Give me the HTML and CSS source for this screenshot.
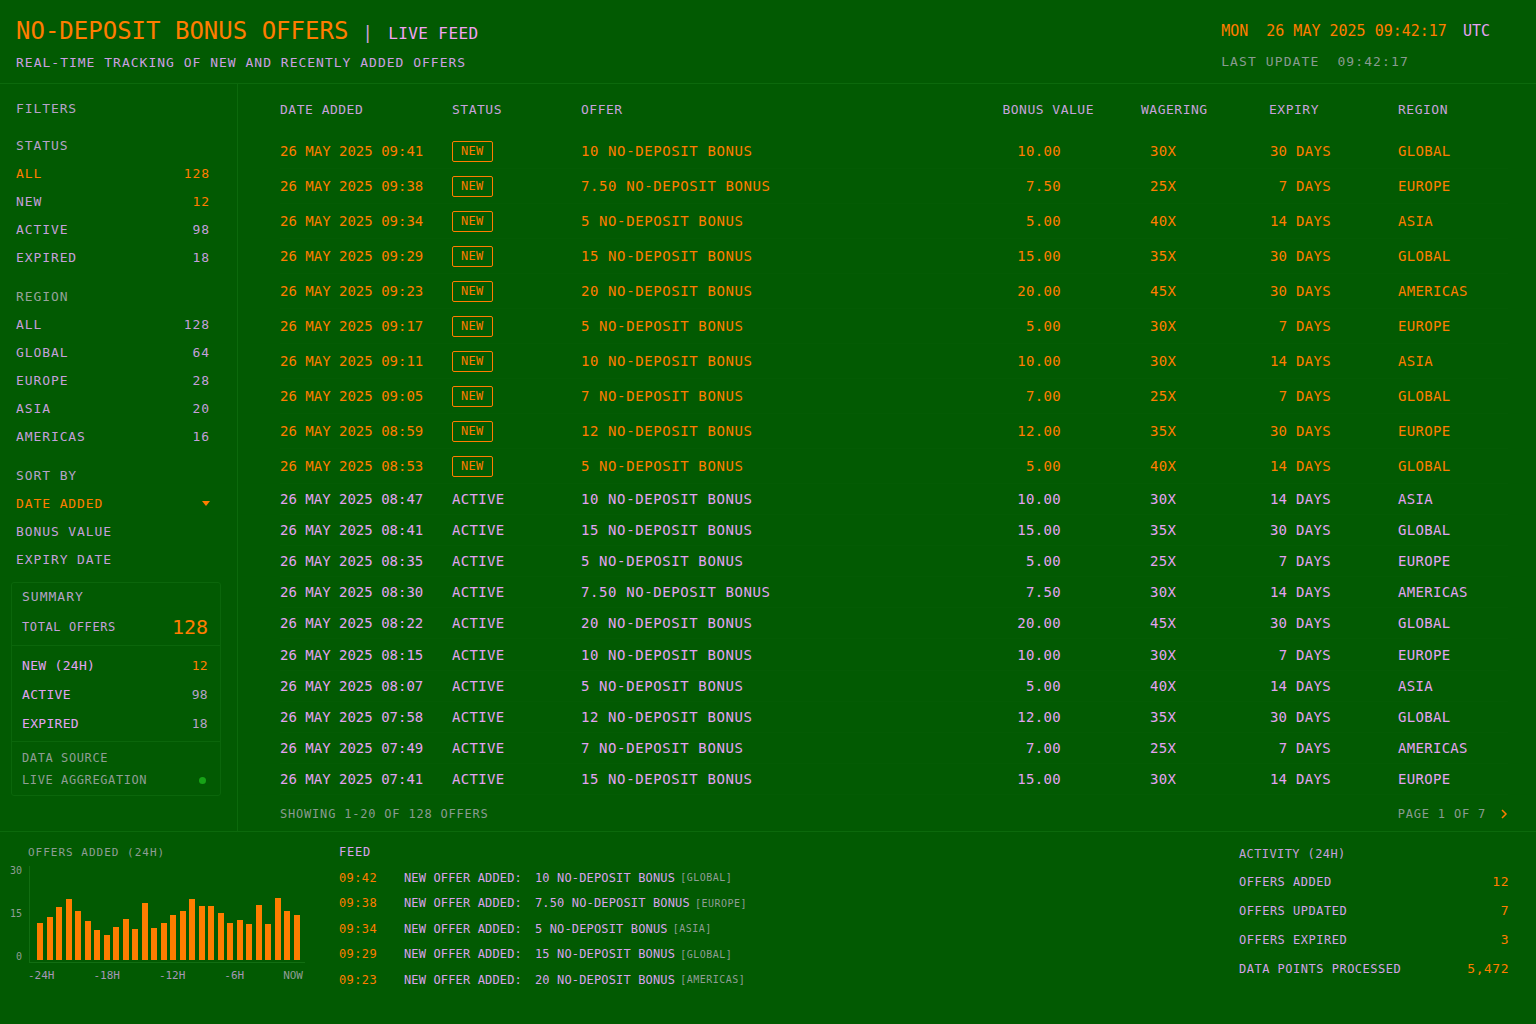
FILE: index.html
```html
<!DOCTYPE html>
<html lang="en">
<head>
    <meta charset="UTF-8">
    <meta name="viewport" content="width=device-width, initial-scale=1.0">
    <title>No-Deposit Bonus Offers | Live Feed</title>
    <link rel="stylesheet" href="styles.css">
</head>
<body>
    <header class="topbar">
        <div class="brand">
            <h1>NO-DEPOSIT BONUS OFFERS<span class="sep">|</span><span class="live">LIVE FEED</span></h1>
            <p class="subtitle">REAL-TIME TRACKING OF NEW AND RECENTLY ADDED OFFERS</p>
        </div>
        <div class="clock">
            <div class="now"><span>MON</span><span class="date">26 MAY 2025 09:42:17</span><span class="tz">UTC</span></div>
            <div class="updated">LAST UPDATE<span>09:42:17</span></div>
        </div>
    </header>

    <div class="content">
        <!-- 筛选栏 -->
        <aside class="sidebar">
            <div class="side-title">FILTERS</div>

            <div class="group">
                <div class="group-label">STATUS</div>
                <div class="opt is-active"><span>ALL</span><span>128</span></div>
                <div class="opt"><span>NEW</span><span class="hot">12</span></div>
                <div class="opt"><span>ACTIVE</span><span>98</span></div>
                <div class="opt"><span>EXPIRED</span><span>18</span></div>
            </div>

            <div class="group">
                <div class="group-label dim">REGION</div>
                <div class="opt"><span>ALL</span><span>128</span></div>
                <div class="opt"><span>GLOBAL</span><span>64</span></div>
                <div class="opt"><span>EUROPE</span><span>28</span></div>
                <div class="opt"><span>ASIA</span><span>20</span></div>
                <div class="opt"><span>AMERICAS</span><span>16</span></div>
            </div>

            <div class="group">
                <div class="group-label">SORT BY</div>
                <div class="opt is-active"><span>DATE ADDED</span><span class="caret"></span></div>
                <div class="opt"><span>BONUS VALUE</span></div>
                <div class="opt"><span>EXPIRY DATE</span></div>
            </div>

            <div class="summary">
                <div class="sum-head">
                    <div class="sum-title">SUMMARY</div>
                    <div class="sum-total"><span>TOTAL OFFERS</span><span class="big">128</span></div>
                </div>
                <div class="sum-rows">
                    <div class="sum-row"><span>NEW (24H)</span><span class="hot">12</span></div>
                    <div class="sum-row"><span>ACTIVE</span><span class="num">98</span></div>
                    <div class="sum-row"><span>EXPIRED</span><span class="num">18</span></div>
                </div>
                <div class="sum-source">
                    <div>DATA SOURCE</div>
                    <div class="source-line"><span>LIVE AGGREGATION</span><span class="dot"></span></div>
                </div>
            </div>
        </aside>

        <!-- 报价列表 -->
        <main class="main">
            <div class="row thead">
                <div>DATE ADDED</div>
                <div>STATUS</div>
                <div>OFFER</div>
                <div class="c-bonus">BONUS VALUE</div>
                <div>WAGERING</div>
                <div>EXPIRY</div>
                <div>REGION</div>
            </div>

            <div class="row is-new"><div>26 MAY 2025 09:41</div><div><span class="badge">NEW</span></div><div class="c-offer">10 NO-DEPOSIT BONUS</div><div class="c-bonus">10.00</div><div class="c-wager">30X</div><div class="c-expiry">30 DAYS</div><div>GLOBAL</div></div>
            <div class="row is-new"><div>26 MAY 2025 09:38</div><div><span class="badge">NEW</span></div><div class="c-offer">7.50 NO-DEPOSIT BONUS</div><div class="c-bonus">7.50</div><div class="c-wager">25X</div><div class="c-expiry">7 DAYS</div><div>EUROPE</div></div>
            <div class="row is-new"><div>26 MAY 2025 09:34</div><div><span class="badge">NEW</span></div><div class="c-offer">5 NO-DEPOSIT BONUS</div><div class="c-bonus">5.00</div><div class="c-wager">40X</div><div class="c-expiry">14 DAYS</div><div>ASIA</div></div>
            <div class="row is-new"><div>26 MAY 2025 09:29</div><div><span class="badge">NEW</span></div><div class="c-offer">15 NO-DEPOSIT BONUS</div><div class="c-bonus">15.00</div><div class="c-wager">35X</div><div class="c-expiry">30 DAYS</div><div>GLOBAL</div></div>
            <div class="row is-new"><div>26 MAY 2025 09:23</div><div><span class="badge">NEW</span></div><div class="c-offer">20 NO-DEPOSIT BONUS</div><div class="c-bonus">20.00</div><div class="c-wager">45X</div><div class="c-expiry">30 DAYS</div><div>AMERICAS</div></div>
            <div class="row is-new"><div>26 MAY 2025 09:17</div><div><span class="badge">NEW</span></div><div class="c-offer">5 NO-DEPOSIT BONUS</div><div class="c-bonus">5.00</div><div class="c-wager">30X</div><div class="c-expiry">7 DAYS</div><div>EUROPE</div></div>
            <div class="row is-new"><div>26 MAY 2025 09:11</div><div><span class="badge">NEW</span></div><div class="c-offer">10 NO-DEPOSIT BONUS</div><div class="c-bonus">10.00</div><div class="c-wager">30X</div><div class="c-expiry">14 DAYS</div><div>ASIA</div></div>
            <div class="row is-new"><div>26 MAY 2025 09:05</div><div><span class="badge">NEW</span></div><div class="c-offer">7 NO-DEPOSIT BONUS</div><div class="c-bonus">7.00</div><div class="c-wager">25X</div><div class="c-expiry">7 DAYS</div><div>GLOBAL</div></div>
            <div class="row is-new"><div>26 MAY 2025 08:59</div><div><span class="badge">NEW</span></div><div class="c-offer">12 NO-DEPOSIT BONUS</div><div class="c-bonus">12.00</div><div class="c-wager">35X</div><div class="c-expiry">30 DAYS</div><div>EUROPE</div></div>
            <div class="row is-new"><div>26 MAY 2025 08:53</div><div><span class="badge">NEW</span></div><div class="c-offer">5 NO-DEPOSIT BONUS</div><div class="c-bonus">5.00</div><div class="c-wager">40X</div><div class="c-expiry">14 DAYS</div><div>GLOBAL</div></div>

            <div class="row"><div>26 MAY 2025 08:47</div><div>ACTIVE</div><div class="c-offer">10 NO-DEPOSIT BONUS</div><div class="c-bonus">10.00</div><div class="c-wager">30X</div><div class="c-expiry">14 DAYS</div><div>ASIA</div></div>
            <div class="row"><div>26 MAY 2025 08:41</div><div>ACTIVE</div><div class="c-offer">15 NO-DEPOSIT BONUS</div><div class="c-bonus">15.00</div><div class="c-wager">35X</div><div class="c-expiry">30 DAYS</div><div>GLOBAL</div></div>
            <div class="row"><div>26 MAY 2025 08:35</div><div>ACTIVE</div><div class="c-offer">5 NO-DEPOSIT BONUS</div><div class="c-bonus">5.00</div><div class="c-wager">25X</div><div class="c-expiry">7 DAYS</div><div>EUROPE</div></div>
            <div class="row"><div>26 MAY 2025 08:30</div><div>ACTIVE</div><div class="c-offer">7.50 NO-DEPOSIT BONUS</div><div class="c-bonus">7.50</div><div class="c-wager">30X</div><div class="c-expiry">14 DAYS</div><div>AMERICAS</div></div>
            <div class="row"><div>26 MAY 2025 08:22</div><div>ACTIVE</div><div class="c-offer">20 NO-DEPOSIT BONUS</div><div class="c-bonus">20.00</div><div class="c-wager">45X</div><div class="c-expiry">30 DAYS</div><div>GLOBAL</div></div>
            <div class="row"><div>26 MAY 2025 08:15</div><div>ACTIVE</div><div class="c-offer">10 NO-DEPOSIT BONUS</div><div class="c-bonus">10.00</div><div class="c-wager">30X</div><div class="c-expiry">7 DAYS</div><div>EUROPE</div></div>
            <div class="row"><div>26 MAY 2025 08:07</div><div>ACTIVE</div><div class="c-offer">5 NO-DEPOSIT BONUS</div><div class="c-bonus">5.00</div><div class="c-wager">40X</div><div class="c-expiry">14 DAYS</div><div>ASIA</div></div>
            <div class="row"><div>26 MAY 2025 07:58</div><div>ACTIVE</div><div class="c-offer">12 NO-DEPOSIT BONUS</div><div class="c-bonus">12.00</div><div class="c-wager">35X</div><div class="c-expiry">30 DAYS</div><div>GLOBAL</div></div>
            <div class="row"><div>26 MAY 2025 07:49</div><div>ACTIVE</div><div class="c-offer">7 NO-DEPOSIT BONUS</div><div class="c-bonus">7.00</div><div class="c-wager">25X</div><div class="c-expiry">7 DAYS</div><div>AMERICAS</div></div>
            <div class="row"><div>26 MAY 2025 07:41</div><div>ACTIVE</div><div class="c-offer">15 NO-DEPOSIT BONUS</div><div class="c-bonus">15.00</div><div class="c-wager">30X</div><div class="c-expiry">14 DAYS</div><div>EUROPE</div></div>

            <div class="table-foot">
                <span>SHOWING 1-20 OF 128 OFFERS</span>
                <span class="pager">PAGE 1 OF 7
                    <svg width="8" height="10" viewBox="0 0 8 10"><path d="M2 1 L6 5 L2 9" fill="none" stroke="#ff7d00" stroke-width="1.5"/></svg>
                </span>
            </div>
        </main>
    </div>

    <!-- 底部面板 -->
    <footer class="bottom">
        <section class="chart">
            <div class="panel-title">OFFERS ADDED (24H)</div>
            <div class="chart-body">
                <div class="y-labels"><span>30</span><span>15</span><span>0</span></div>
                <div class="plot">
                    <div class="bar" style="height: 37px"></div>
                    <div class="bar" style="height: 43px"></div>
                    <div class="bar" style="height: 53px"></div>
                    <div class="bar" style="height: 61px"></div>
                    <div class="bar" style="height: 49px"></div>
                    <div class="bar" style="height: 39px"></div>
                    <div class="bar" style="height: 30px"></div>
                    <div class="bar" style="height: 25px"></div>
                    <div class="bar" style="height: 33px"></div>
                    <div class="bar" style="height: 41px"></div>
                    <div class="bar" style="height: 31px"></div>
                    <div class="bar" style="height: 57px"></div>
                    <div class="bar" style="height: 32px"></div>
                    <div class="bar" style="height: 37px"></div>
                    <div class="bar" style="height: 45px"></div>
                    <div class="bar" style="height: 49px"></div>
                    <div class="bar" style="height: 61px"></div>
                    <div class="bar" style="height: 54px"></div>
                    <div class="bar" style="height: 54px"></div>
                    <div class="bar" style="height: 47px"></div>
                    <div class="bar" style="height: 37px"></div>
                    <div class="bar" style="height: 40px"></div>
                    <div class="bar" style="height: 36px"></div>
                    <div class="bar" style="height: 55px"></div>
                    <div class="bar" style="height: 36px"></div>
                    <div class="bar" style="height: 62px"></div>
                    <div class="bar" style="height: 49px"></div>
                    <div class="bar" style="height: 45px"></div>
                </div>
            </div>
            <div class="x-labels"><span>-24H</span><span>-18H</span><span>-12H</span><span>-6H</span><span>NOW</span></div>
        </section>

        <section class="feed">
            <div class="panel-title">FEED</div>
            <div class="feed-line"><span class="t">09:42</span><span class="msg">NEW OFFER ADDED:</span><span class="what">10 NO-DEPOSIT BONUS</span><span class="tag">[GLOBAL]</span></div>
            <div class="feed-line"><span class="t">09:38</span><span class="msg">NEW OFFER ADDED:</span><span class="what">7.50 NO-DEPOSIT BONUS</span><span class="tag">[EUROPE]</span></div>
            <div class="feed-line"><span class="t">09:34</span><span class="msg">NEW OFFER ADDED:</span><span class="what">5 NO-DEPOSIT BONUS</span><span class="tag">[ASIA]</span></div>
            <div class="feed-line"><span class="t">09:29</span><span class="msg">NEW OFFER ADDED:</span><span class="what">15 NO-DEPOSIT BONUS</span><span class="tag">[GLOBAL]</span></div>
            <div class="feed-line"><span class="t">09:23</span><span class="msg">NEW OFFER ADDED:</span><span class="what">20 NO-DEPOSIT BONUS</span><span class="tag">[AMERICAS]</span></div>
        </section>

        <section class="activity">
            <div class="panel-title">ACTIVITY (24H)</div>
            <div class="act-row"><span>OFFERS ADDED</span><span class="val">12</span></div>
            <div class="act-row"><span>OFFERS UPDATED</span><span class="val">7</span></div>
            <div class="act-row"><span>OFFERS EXPIRED</span><span class="val">3</span></div>
            <div class="act-row"><span>DATA POINTS PROCESSED</span><span class="val">5,472</span></div>
        </section>
    </footer>
</body>
</html>
```

FILE: styles.css
```css
/* 页面布局 */
* {
    box-sizing: border-box;
}

body {
    margin: 0;
    width: 1536px;
    height: 1024px;
    overflow: hidden;
    background-color: #025a02;
    color: #e4a2f2;
    font-family: "DejaVu Sans Mono", "Liberation Mono", monospace;
}

/* 顶栏 */
.topbar {
    height: 84px;
    border-bottom: 1px solid #0c690c;
    display: flex;
    justify-content: space-between;
    padding: 17px 46px 0 16px;
}

h1 {
    margin: 0;
    font-size: 24px;
    font-weight: normal;
    line-height: 28px;
    color: #ff7d00;
}

h1 .sep {
    margin: 0 15px 0 14px;
    font-size: 18px;
    color: #c7a0dc;
}

h1 .live {
    font-size: 16px;
    letter-spacing: 0.4px;
    color: #f2a2f2;
}

.subtitle {
    margin: 7px 0 0 0;
    font-size: 13px;
    line-height: 16px;
    letter-spacing: 1px;
    color: #cc9fe2;
}

.clock {
    display: flex;
    flex-direction: column;
    align-items: flex-start;
}

.now {
    font-size: 15px;
    line-height: 28px;
    color: #ff7d00;
}

.now .date {
    margin-left: 18px;
}

.now .tz {
    margin-left: 16px;
    color: #e4a2f2;
}

.updated {
    margin-top: 9px;
    font-size: 13px;
    line-height: 16px;
    letter-spacing: 1.1px;
    color: #8a9a91;
}

.updated span {
    margin-left: 18px;
}

.content {
    display: flex;
    height: 748px;
    border-bottom: 1px solid #0c690c;
}

/* 筛选栏 */
.sidebar {
    width: 238px;
    flex-shrink: 0;
    border-right: 1px solid #0c690c;
    padding: 16px 16px 0 11px;
    font-size: 13px;
    letter-spacing: 0.9px;
    color: #c59fdb;
}

.side-title {
    padding-left: 5px;
    line-height: 18px;
    margin-bottom: 15px;
    color: #b6a2c8;
}

.group + .group {
    margin-top: 13px;
}

.group-label {
    padding: 0 5px;
    line-height: 26px;
    color: #b6a2c8;
}

.group-label.dim {
    color: #96a29a;
}

.opt {
    display: flex;
    justify-content: space-between;
    align-items: center;
    height: 28px;
    padding: 0 11px 0 5px;
}

.opt.is-active {
    color: #ff7d00;
}

.hot {
    color: #ff7d00;
}

.caret {
    width: 0;
    height: 0;
    border-left: 4px solid transparent;
    border-right: 4px solid transparent;
    border-top: 5px solid #ff7d00;
}

.summary {
    margin-top: 9px;
    border: 1px solid #0b660b;
    border-radius: 3px;
    font-size: 12px;
    letter-spacing: 0.6px;
}

.sum-head {
    padding: 6px 12px 2px 10px;
    border-bottom: 1px solid #0b660b;
}

.sum-title {
    font-size: 13px;
    letter-spacing: 1px;
    line-height: 16px;
    color: #b6a2c8;
}

.sum-total {
    margin-top: 6px;
    height: 32px;
    display: flex;
    justify-content: space-between;
    align-items: center;
    color: #c59fdb;
}

.sum-total .big {
    font-size: 20px;
    letter-spacing: 0;
    color: #ff7d00;
}

.sum-rows {
    padding: 5px 12px 3px 10px;
    border-bottom: 1px solid #0b660b;
}

.sum-row {
    display: flex;
    justify-content: space-between;
    align-items: center;
    height: 29px;
    font-size: 13px;
    letter-spacing: 0.3px;
    color: #e2a2f2;
}

.sum-row .num {
    color: #b6a2c8;
}

.sum-source {
    padding: 8px 12px 7px 10px;
    color: #8f9d95;
    line-height: 16px;
}

.source-line {
    margin-top: 6px;
    display: flex;
    justify-content: space-between;
    align-items: center;
}

.dot {
    width: 7px;
    height: 7px;
    margin-right: 2px;
    border-radius: 50%;
    background-color: #17a317;
}

/* 报价表 */
.main {
    flex: 1;
    padding: 0 28px 0 42px;
    display: flex;
    flex-direction: column;
}

.row {
    display: grid;
    grid-template-columns: 172px 129px 373px 187px 128px 129px 1fr;
    align-items: center;
    height: 31.1px;
    flex-shrink: 0;
    font-size: 14px;
    letter-spacing: 0.3px;
    color: #e4a2f2;
    border-bottom: 1px solid rgba(255, 255, 255, 0.012);
}

.row > div:first-child {
    letter-spacing: 0;
}

.row.is-new {
    height: 35px;
    color: #ff7d00;
}

.row.thead {
    height: 50px;
    font-size: 13px;
    letter-spacing: 0.5px;
    color: #c7a2dc;
    border-bottom: none;
}

.row.thead > div:first-child {
    letter-spacing: 0.5px;
}

.c-offer {
    letter-spacing: 0.6px;
}

.c-bonus {
    text-align: right;
    padding-right: 80px;
}

.thead .c-bonus {
    padding-right: 47px;
}

.c-wager {
    padding-left: 9px;
}

.c-expiry {
    text-align: right;
    padding-right: 67px;
}

.badge {
    display: inline-block;
    border: 1.5px solid #ff7d00;
    border-radius: 2px;
    padding: 0 8px;
    font-size: 12px;
    line-height: 19px;
    letter-spacing: 0.3px;
}

.table-foot {
    flex: 1;
    display: flex;
    justify-content: space-between;
    align-items: center;
    padding-top: 2px;
    font-size: 12px;
    letter-spacing: 0.8px;
    color: #8a9a91;
}

.pager {
    display: flex;
    align-items: center;
    gap: 14px;
}

/* 底部面板 */
.bottom {
    display: flex;
    height: 192px;
}

.panel-title {
    font-size: 12px;
    line-height: 14px;
    letter-spacing: 0.8px;
}

.chart {
    width: 318px;
    padding: 14px 0 0 10px;
}

.chart .panel-title {
    padding-left: 18px;
    font-size: 11px;
    letter-spacing: 1px;
    color: #8f9d95;
}

.chart-body {
    margin-top: 6px;
    display: flex;
    gap: 7px;
}

.y-labels {
    width: 12px;
    height: 96px;
    display: flex;
    flex-direction: column;
    justify-content: space-between;
    align-items: flex-end;
    font-size: 10px;
    line-height: 10px;
    color: #8f9d95;
}

.plot {
    width: 276px;
    height: 97px;
    border-left: 1px solid #126e12;
    border-bottom: 1px solid #126e12;
    display: flex;
    align-items: flex-end;
    gap: 3.5px;
    padding: 0 0 2px 7px;
}

.bar {
    width: 6px;
    background-color: #ff7d00;
}

.x-labels {
    margin: 7px 0 0 18px;
    width: 275px;
    display: flex;
    justify-content: space-between;
    font-size: 11px;
    line-height: 12px;
    color: #a596b6;
}

.x-labels span:last-child {
    color: #8f9d95;
}

.feed {
    flex: 1;
    padding: 13px 0 0 21px;
}

.feed .panel-title {
    margin-bottom: 6px;
    color: #d9a2ec;
}

.feed-line {
    height: 25.5px;
    display: flex;
    align-items: center;
    font-size: 12px;
    letter-spacing: 0.15px;
    color: #d9a2ec;
}

.feed-line .t {
    width: 65px;
    letter-spacing: 0.4px;
    color: #ff7d00;
}

.feed-line .what {
    margin-left: 13px;
}

.feed-line .tag {
    margin-left: 5px;
    font-size: 10px;
    letter-spacing: 0.5px;
    color: #8f9d95;
}

.activity {
    width: 270px;
    margin-right: 27px;
    padding-top: 14px;
}

.activity .panel-title {
    line-height: 16px;
    letter-spacing: 0.4px;
    color: #c59fdb;
    margin-bottom: 5px;
}

.act-row {
    display: flex;
    justify-content: space-between;
    align-items: center;
    height: 29px;
    font-size: 12px;
    letter-spacing: 0.5px;
    color: #d4a2e8;
}

.act-row .val {
    font-size: 13px;
    letter-spacing: 0.5px;
    color: #ff7d00;
}
```
